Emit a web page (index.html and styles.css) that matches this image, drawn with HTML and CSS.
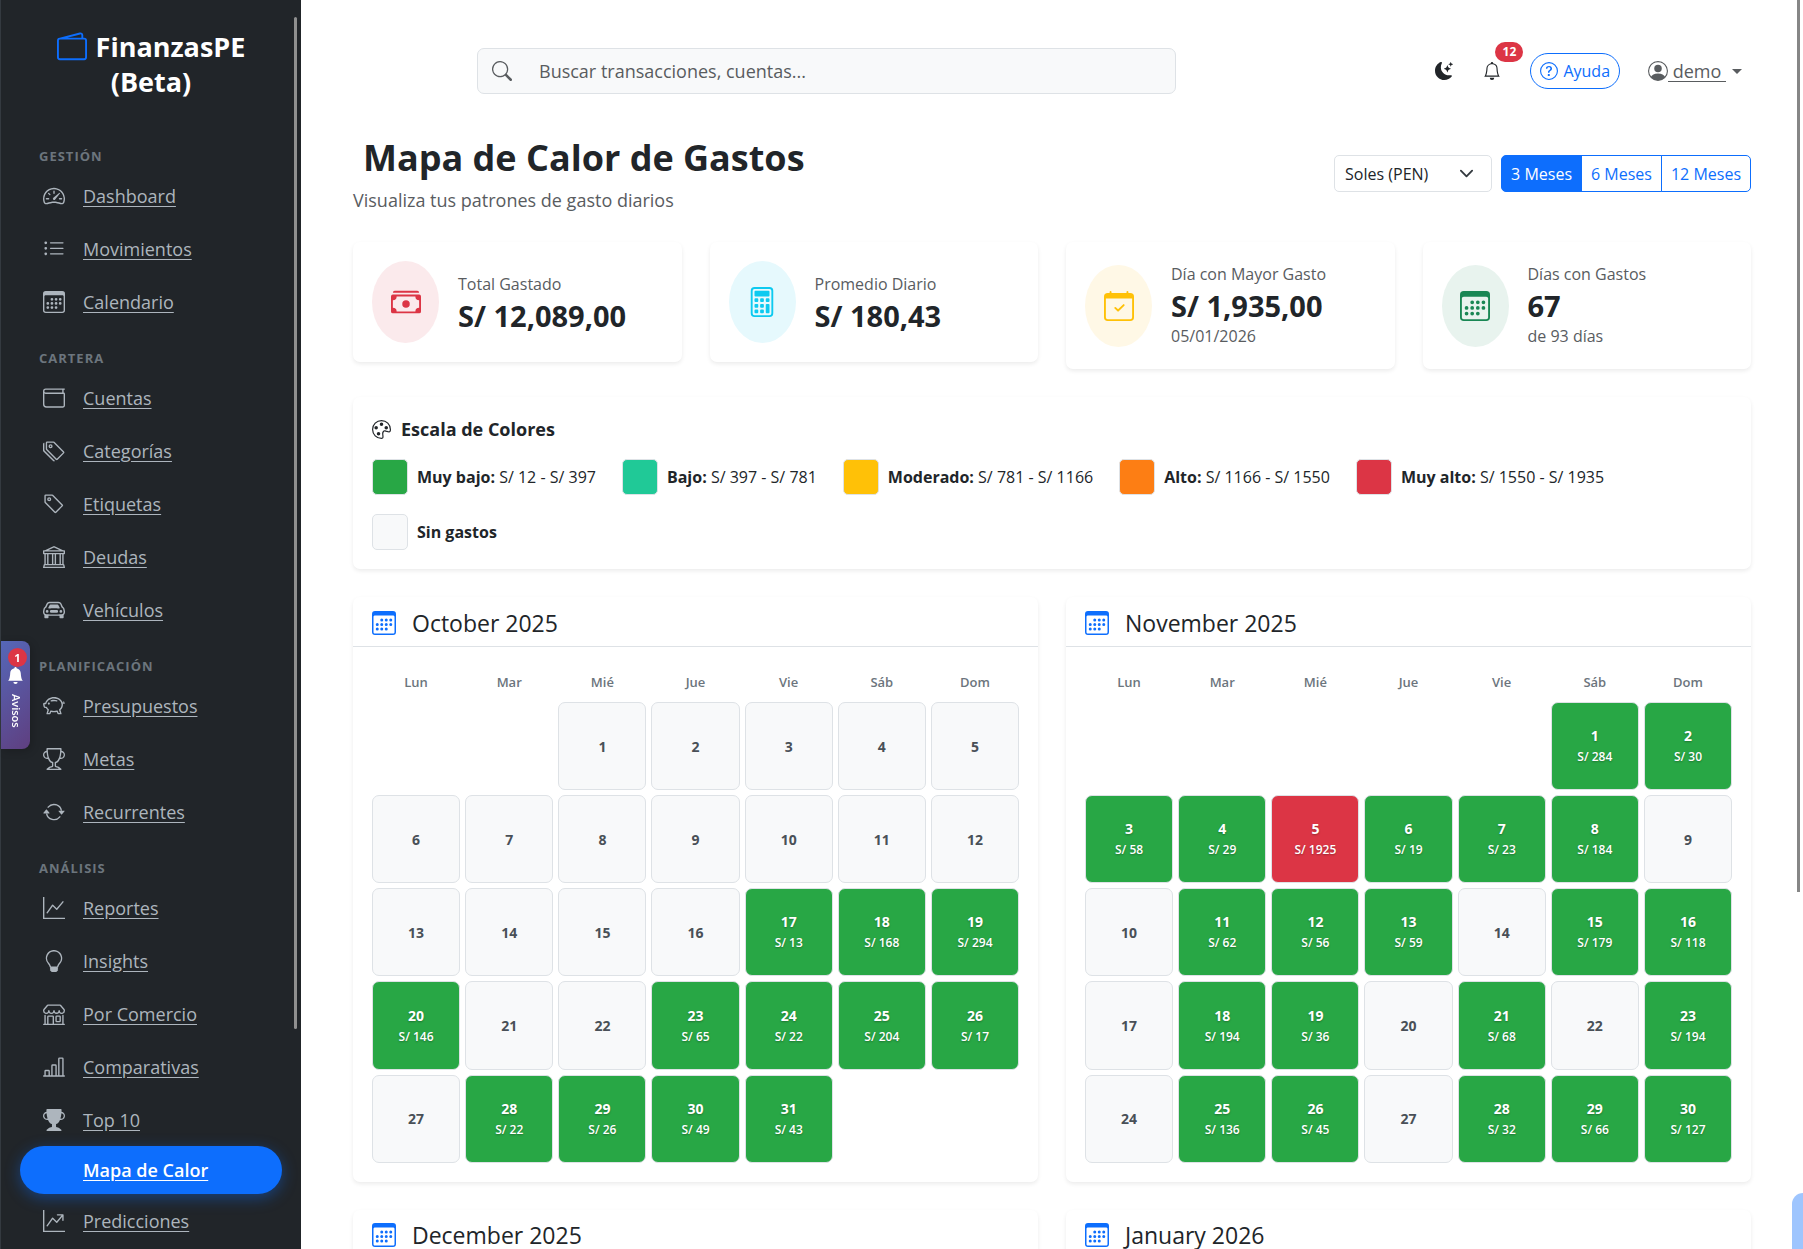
FILE: index.html
```html
<!DOCTYPE html>
<html lang="es">
<head>
<meta charset="utf-8">
<meta name="viewport" content="width=device-width, initial-scale=1">
<title>Mapa de Calor de Gastos - FinanzasPE</title>
<link rel="stylesheet" href="styles.css">
</head>
<body>
<svg class="sprite" aria-hidden="true">
<symbol id="wallet2" viewBox="0 0 16 16"><path d="M12.136.326A1.5 1.5 0 0 1 14 1.78V3h.5A1.5 1.5 0 0 1 16 4.5v9a1.5 1.5 0 0 1-1.5 1.5h-13A1.5 1.5 0 0 1 0 13.5v-9a1.5 1.5 0 0 1 1.432-1.499zM5.562 3H13V1.78a.5.5 0 0 0-.621-.484zM1.5 4a.5.5 0 0 0-.5.5v9a.5.5 0 0 0 .5.5h13a.5.5 0 0 0 .5-.5v-9a.5.5 0 0 0-.5-.5z"/></symbol>
<symbol id="speedometer" viewBox="0 0 16 16"><path d="M8 4a.5.5 0 0 1 .5.5V6a.5.5 0 0 1-1 0V4.5A.5.5 0 0 1 8 4M3.732 5.732a.5.5 0 0 1 .707 0l.915.914a.5.5 0 1 1-.708.708l-.914-.915a.5.5 0 0 1 0-.707M2 10a.5.5 0 0 1 .5-.5h1.586a.5.5 0 0 1 0 1H2.5A.5.5 0 0 1 2 10m9.5 0a.5.5 0 0 1 .5-.5h1.5a.5.5 0 0 1 0 1H12a.5.5 0 0 1-.5-.5m.754-4.246a.39.39 0 0 0-.527-.02L7.547 9.31a.91.91 0 1 0 1.302 1.258l3.434-4.297a.39.39 0 0 0-.029-.518z"/><path fill-rule="evenodd" d="M0 10a8 8 0 1 1 15.547 2.661c-.442 1.253-1.845 1.602-2.932 1.25C11.309 13.488 9.475 13 8 13c-1.474 0-3.31.488-4.615.911-1.087.352-2.49.003-2.932-1.25A8 8 0 0 1 0 10m8-7a7 7 0 0 0-6.603 9.329c.203.575.923.876 1.68.63C4.397 12.533 6.358 12 8 12s3.604.532 4.923.96c.757.245 1.477-.056 1.68-.631A7 7 0 0 0 8 3"/></symbol>
<symbol id="list" viewBox="0 0 16 16"><path d="M5 11.5a.5.5 0 0 1 .5-.5h9a.5.5 0 0 1 0 1h-9a.5.5 0 0 1-.5-.5m0-4a.5.5 0 0 1 .5-.5h9a.5.5 0 0 1 0 1h-9a.5.5 0 0 1-.5-.5m0-4a.5.5 0 0 1 .5-.5h9a.5.5 0 0 1 0 1h-9a.5.5 0 0 1-.5-.5m-3 1a1 1 0 1 0 0-2 1 1 0 0 0 0 2m0 4a1 1 0 1 0 0-2 1 1 0 0 0 0 2m0 4a1 1 0 1 0 0-2 1 1 0 0 0 0 2"/></symbol>
<symbol id="calendar" viewBox="0 0 16 16"><path d="M14 0H2a2 2 0 0 0-2 2v12a2 2 0 0 0 2 2h12a2 2 0 0 0 2-2V2a2 2 0 0 0-2-2M1 3.857C1 3.384 1.448 3 2 3h12c.552 0 1 .384 1 .857v10.286c0 .473-.448.857-1 .857H2c-.552 0-1-.384-1-.857z"/><path d="M6.500 7a1 1 0 1 0 0-2 1 1 0 0 0 0 2m3 0a1 1 0 1 0 0-2 1 1 0 0 0 0 2m3 0a1 1 0 1 0 0-2 1 1 0 0 0 0 2m-9 3a1 1 0 1 0 0-2 1 1 0 0 0 0 2m3 0a1 1 0 1 0 0-2 1 1 0 0 0 0 2m3 0a1 1 0 1 0 0-2 1 1 0 0 0 0 2m3 0a1 1 0 1 0 0-2 1 1 0 0 0 0 2m-9 3a1 1 0 1 0 0-2 1 1 0 0 0 0 2m3 0a1 1 0 1 0 0-2 1 1 0 0 0 0 2m3 0a1 1 0 1 0 0-2 1 1 0 0 0 0 2"/></symbol>
<symbol id="wallet" viewBox="0 0 16 16"><path d="M0 3a2 2 0 0 1 2-2h13.5a.5.5 0 0 1 0 1H15v2a1 1 0 0 1 1 1v8.5a1.500 1.500 0 0 1-1.500 1.500h-12A2.500 2.500 0 0 1 0 12.500zm1 1.732V12.500A1.500 1.500 0 0 0 2.500 14h12a.5.5 0 0 0 .5-.5V5H2a2 2 0 0 1-1-.268M1 3a1 1 0 0 0 1 1h12V2H2a1 1 0 0 0-1 1"/></symbol>
<symbol id="tags" viewBox="0 0 16 16"><path d="M3 2v4.586l7 7L14.586 9l-7-7zM2 2a1 1 0 0 1 1-1h4.586a1 1 0 0 1 .707.293l7 7a1 1 0 0 1 0 1.414l-4.586 4.586a1 1 0 0 1-1.414 0l-7-7A1 1 0 0 1 2 6.586z"/><path d="M5.500 5a.5.5 0 1 1 0-1 .5.5 0 0 1 0 1m0 1a1.500 1.500 0 1 0 0-3 1.500 1.500 0 0 0 0 3M1 7.086a1 1 0 0 0 .293.707L8.750 15.250l-.043.043a1 1 0 0 1-1.414 0l-7-7A1 1 0 0 1 0 7.586V3a1 1 0 0 1 1-1z"/></symbol>
<symbol id="tag" viewBox="0 0 16 16"><path d="M6 4.500a1.500 1.500 0 1 1-3 0 1.500 1.500 0 0 1 3 0m-1 0a.5.5 0 1 0-1 0 .5.5 0 0 0 1 0"/><path d="M2 1h4.586a1 1 0 0 1 .707.293l7 7a1 1 0 0 1 0 1.414l-4.586 4.586a1 1 0 0 1-1.414 0l-7-7A1 1 0 0 1 1 6.586V2a1 1 0 0 1 1-1m0 5.586 7 7L13.586 9l-7-7H2z"/></symbol>
<symbol id="bank" viewBox="0 0 16 16"><path d="m8 0 6.610 3h.89a.5.5 0 0 1 .5.5v2a.5.5 0 0 1-.5.5H15v7a.5.5 0 0 1 .485.38l.5 2a.498.498 0 0 1-.485.62H.5a.498.498 0 0 1-.485-.62l.5-2A.5.5 0 0 1 1 13V6H.5a.5.5 0 0 1-.5-.5v-2A.5.5 0 0 1 .5 3h.89zM3.777 3h8.447L8 1zM2 6v7h1V6zm2 0v7h2.500V6zm3.500 0v7h1V6zm2 0v7H12V6zM13 6v7h1V6zm2-1V4H1v1zm-.39 9H1.390l-.25 1h13.720z"/></symbol>
<symbol id="car" viewBox="0 0 16 16"><path d="M4 9a1 1 0 1 1-2 0 1 1 0 0 1 2 0m10 0a1 1 0 1 1-2 0 1 1 0 0 1 2 0M6 8a1 1 0 0 0 0 2h4a1 1 0 1 0 0-2zM4.862 4.276 3.906 6.190a.51.51 0 0 0 .497.731c.91-.073 2.350-.17 3.597-.17s2.688.097 3.597.17a.51.51 0 0 0 .497-.731l-.956-1.913A.5.5 0 0 0 10.691 4H5.309a.5.5 0 0 0-.447.276"/><path d="M2.520 3.515A2.500 2.500 0 0 1 4.820 2h6.362c1 0 1.904.596 2.298 1.515l.792 1.848c.075.175.21.319.38.404.5.25.855.715.965 1.262l.335 1.679q.05.242.049.49v.413c0 .814-.39 1.543-1 1.997V13.500a.5.5 0 0 1-.5.5h-2a.5.5 0 0 1-.5-.5v-1.338c-1.292.048-2.745.088-4 .088s-2.708-.04-4-.088V13.500a.5.5 0 0 1-.5.5h-2a.5.5 0 0 1-.5-.5v-1.892c-.61-.454-1-1.183-1-1.997v-.413a2.500 2.500 0 0 1 .049-.49l.335-1.680c.11-.546.465-1.012.964-1.261a.8.8 0 0 0 .381-.404l.792-1.848ZM4.820 3a1.500 1.500 0 0 0-1.379.91l-.792 1.847a1.800 1.800 0 0 1-.853.904.8.8 0 0 0-.43.564L1.030 8.904a1.500 1.500 0 0 0-.03.294v.413c0 .796.62 1.448 1.408 1.484 1.555.07 3.786.155 5.592.155s4.037-.084 5.592-.155A1.480 1.480 0 0 0 15 9.611v-.413q0-.148-.03-.294l-.335-1.680a.8.8 0 0 0-.43-.563 1.800 1.800 0 0 1-.853-.904l-.792-1.848A1.500 1.500 0 0 0 11.180 3z"/></symbol>
<symbol id="piggy" viewBox="0 0 16 16"><path d="M5 6.250a.75.75 0 1 1-1.500 0 .75.75 0 0 1 1.500 0m1.138-1.496A6.600 6.600 0 0 1 7.964 4.500c.666 0 1.303.097 1.893.273a.5.5 0 0 0 .286-.958A7.600 7.600 0 0 0 7.964 3.500c-.734 0-1.441.103-2.102.292a.5.5 0 1 0 .276.962"/><path fill-rule="evenodd" d="M7.964 1.527c-2.977 0-5.571 1.704-6.320 4.125h-.55A1 1 0 0 0 .11 6.824l.254 1.460a1.500 1.500 0 0 0 1.478 1.243h.263c.3.513.688.978 1.145 1.382l-.729 2.477a.5.5 0 0 0 .48.641h2a.5.5 0 0 0 .471-.332l.482-1.351c.635.173 1.310.267 2.011.267.707 0 1.388-.095 2.028-.272l.543 1.372a.5.5 0 0 0 .465.316h2a.5.5 0 0 0 .478-.645l-.761-2.506C13.810 9.895 14.500 8.559 14.500 7.069q0-.218-.02-.431c.261-.11.508-.266.705-.444.315.306.815.306.815-.417 0 .223-.5.223-.461-.026a1 1 0 0 0 .09-.255.7.7 0 0 0-.202-.645.58.58 0 0 0-.707-.098.74.74 0 0 0-.375.562c-.024.243.082.48.32.654a2 2 0 0 1-.259.153c-.534-2.664-3.284-4.595-6.442-4.595M2.516 6.260c.455-2.066 2.667-3.733 5.448-3.733 3.146 0 5.536 2.114 5.536 4.542 0 1.254-.624 2.410-1.670 3.248a.5.5 0 0 0-.165.535l.66 2.175h-.985l-.59-1.487a.5.5 0 0 0-.629-.288c-.661.23-1.390.359-2.157.359a6.600 6.600 0 0 1-2.157-.359.5.5 0 0 0-.635.304l-.525 1.471h-.979l.633-2.150a.5.5 0 0 0-.17-.534 4.650 4.650 0 0 1-1.284-1.541.5.5 0 0 0-.446-.275h-.56a.5.5 0 0 1-.492-.414l-.254-1.460h.933a.5.5 0 0 0 .488-.393m12.621-.857a.6.6 0 0 1-.098.21l-.044-.025c-.146-.09-.157-.175-.152-.223a.24.24 0 0 1 .117-.173c.049-.027.08-.021.113.012a.2.2 0 0 1 .064.199"/></symbol>
<symbol id="trophy" viewBox="0 0 16 16"><path d="M2.500.5A.5.5 0 0 1 3 0h10a.5.5 0 0 1 .5.5q0 .807-.034 1.536a3 3 0 1 1-1.133 5.890c-.79 1.865-1.878 2.777-2.833 3.011v2.173l1.425.356c.194.048.377.135.537.255L13.300 15.100a.5.5 0 0 1-.3.9H3a.5.5 0 0 1-.3-.9l1.838-1.379c.16-.12.343-.207.537-.255L6.500 13.110v-2.173c-.955-.234-2.043-1.146-2.833-3.012a3 3 0 1 1-1.132-5.890A33 33 0 0 1 2.500.5m.099 2.540a2 2 0 0 0 .72 3.935c-.333-1.050-.588-2.346-.72-3.935m10.083 3.935a2 2 0 0 0 .72-3.935c-.133 1.590-.388 2.885-.72 3.935M3.504 1q.01.775.056 1.469c.13 2.028.457 3.546.87 4.667C5.294 9.480 6.484 10 7 10a.5.5 0 0 1 .5.5v2.610a1 1 0 0 1-.757.97l-1.426.356a.5.5 0 0 0-.179.085L4.500 15h7l-.638-.479a.5.5 0 0 0-.18-.085l-1.425-.356a1 1 0 0 1-.757-.97V10.500A.5.5 0 0 1 9 10c.516 0 1.706-.52 2.570-2.864.413-1.120.74-2.640.87-4.667q.045-.694.056-1.469z"/></symbol>
<symbol id="trophy-fill" viewBox="0 0 16 16"><path d="M2.500.5A.5.5 0 0 1 3 0h10a.5.5 0 0 1 .5.5q0 .807-.034 1.536a3 3 0 1 1-1.133 5.890c-.79 1.865-1.878 2.777-2.833 3.011v2.173l1.425.356c.194.048.377.135.537.255L13.300 15.100a.5.5 0 0 1-.3.9H3a.5.5 0 0 1-.3-.9l1.838-1.379c.16-.12.343-.207.537-.255L6.500 13.110v-2.173c-.955-.234-2.043-1.146-2.833-3.012a3 3 0 1 1-1.132-5.890A33 33 0 0 1 2.500.5m.099 2.540a2 2 0 0 0 .72 3.935c-.333-1.050-.588-2.346-.72-3.935m10.083 3.935a2 2 0 0 0 .72-3.935c-.133 1.590-.388 2.885-.72 3.935"/></symbol>
<symbol id="repeat" viewBox="0 0 16 16"><path d="M11.534 7h3.932a.25.25 0 0 1 .192.41l-1.966 2.360a.25.25 0 0 1-.384 0l-1.966-2.360a.25.25 0 0 1 .192-.41m-11 2h3.932a.25.25 0 0 0 .192-.41L2.692 6.230a.25.25 0 0 0-.384 0L.342 8.590A.25.25 0 0 0 .534 9"/><path d="M8 3c-1.552 0-2.940.707-3.857 1.818a.5.5 0 1 1-.771-.636A6.002 6.002 0 0 1 13.917 7H12.900A5 5 0 0 0 8 3M3.100 9a5.002 5.002 0 0 0 8.757 2.182.5.5 0 1 1 .771.636A6.002 6.002 0 0 1 2.083 9z"/></symbol>
<symbol id="graph" viewBox="0 0 16 16"><path fill-rule="evenodd" d="M0 0h1v15h15v1H0zm14.817 3.113a.5.5 0 0 1 .07.704l-4.500 5.500a.5.5 0 0 1-.74.037L7.060 6.767l-3.656 5.027a.5.5 0 0 1-.808-.588l4-5.500a.5.5 0 0 1 .758-.06l2.609 2.610 4.150-5.073a.5.5 0 0 1 .704-.07"/></symbol>
<symbol id="graph-arrow" viewBox="0 0 16 16"><path fill-rule="evenodd" d="M0 0h1v15h15v1H0zm10 3.500a.5.5 0 0 1 .5-.5h4a.5.5 0 0 1 .5.5v4a.5.5 0 0 1-1 0V4.900l-3.613 4.417a.5.5 0 0 1-.74.037L7.060 6.767l-3.656 5.027a.5.5 0 0 1-.808-.588l4-5.500a.5.5 0 0 1 .758-.06l2.609 2.610L13.445 4H10.500a.5.5 0 0 1-.5-.5"/></symbol>
<symbol id="bulb" viewBox="0 0 16 16"><path d="M2 6a6 6 0 1 1 10.174 4.310c-.203.196-.359.4-.453.619l-.762 1.769A.5.5 0 0 1 10.500 13a.5.5 0 0 1 0 1 .5.5 0 0 1 0 1l-.224.447a1 1 0 0 1-.894.553H6.618a1 1 0 0 1-.894-.553L5.500 15a.5.5 0 0 1 0-1 .5.5 0 0 1 0-1 .5.5 0 0 1-.46-.302l-.761-1.770a2 2 0 0 0-.453-.618A5.980 5.980 0 0 1 2 6m6-5a5 5 0 0 0-3.479 8.592c.263.254.514.564.676.941L5.830 12h4.342l.632-1.467c.162-.377.413-.687.676-.941A5 5 0 0 0 8 1"/></symbol>
<symbol id="shop" viewBox="0 0 16 16"><path d="M2.970 1.350A1 1 0 0 1 3.730 1h8.540a1 1 0 0 1 .76.35l2.609 3.044A1.500 1.500 0 0 1 16 5.370v.255a2.375 2.375 0 0 1-4.250 1.458A2.370 2.370 0 0 1 9.875 8 2.370 2.370 0 0 1 8 7.083 2.370 2.370 0 0 1 6.125 8a2.370 2.370 0 0 1-1.875-.917A2.375 2.375 0 0 1 0 5.625V5.370a1.500 1.500 0 0 1 .361-.976zm1.780 4.275a1.375 1.375 0 0 0 2.750 0 .5.5 0 0 1 1 0 1.375 1.375 0 0 0 2.750 0 .5.5 0 0 1 1 0 1.375 1.375 0 1 0 2.750 0V5.370a.5.5 0 0 0-.12-.325L12.270 2H3.730L1.120 5.045A.5.5 0 0 0 1 5.370v.255a1.375 1.375 0 0 0 2.750 0 .5.5 0 0 1 1 0M1.500 8.500A.5.5 0 0 1 2 9v6h1v-5a1 1 0 0 1 1-1h3a1 1 0 0 1 1 1v5h6V9a.5.5 0 0 1 1 0v6h.5a.5.5 0 0 1 0 1H.5a.5.5 0 0 1 0-1H1V9a.5.5 0 0 1 .5-.5M4 15h3v-5H4zm5-5a1 1 0 0 1 1-1h2a1 1 0 0 1 1 1v3a1 1 0 0 1-1 1h-2a1 1 0 0 1-1-1zm3 0h-2v3h2z"/></symbol>
<symbol id="bars" viewBox="0 0 16 16"><path d="M11 2a1 1 0 0 1 1-1h2a1 1 0 0 1 1 1v12h.5a.5.5 0 0 1 0 1H.5a.5.5 0 0 1 0-1H1v-3a1 1 0 0 1 1-1h2a1 1 0 0 1 1 1v3h1V7a1 1 0 0 1 1-1h2a1 1 0 0 1 1 1v7h1zm1 12h2V2h-2zm-3 0V7H7v7zm-5 0v-3H2v3z"/></symbol>
<symbol id="search" viewBox="0 0 16 16"><path d="M11.742 10.344a6.500 6.500 0 1 0-1.397 1.398h-.001q.044.06.098.115l3.850 3.850a1 1 0 0 0 1.415-1.414l-3.850-3.850a1 1 0 0 0-.115-.1zM12 6.500a5.500 5.500 0 1 1-11 0 5.500 5.500 0 0 1 11 0"/></symbol>
<symbol id="moon" viewBox="0 0 16 16"><path d="M6 .278a.77.77 0 0 1 .08.858 7.200 7.200 0 0 0-.878 3.460c0 4.021 3.278 7.277 7.318 7.277q.792-.001 1.533-.16a.79.79 0 0 1 .81.316.73.73 0 0 1-.031.893A8.350 8.350 0 0 1 8.344 16C3.734 16 0 12.286 0 7.710 0 4.266 2.114 1.312 5.124.06A.75.75 0 0 1 6 .278"/><path d="M10.794 3.148a.217.217 0 0 1 .412 0l.387 1.162c.173.518.579.924 1.097 1.097l1.162.387a.217.217 0 0 1 0 .412l-1.162.387a1.730 1.730 0 0 0-1.097 1.097l-.387 1.162a.217.217 0 0 1-.412 0l-.387-1.162A1.730 1.730 0 0 0 9.310 6.593l-1.162-.387a.217.217 0 0 1 0-.412l1.162-.387a1.730 1.730 0 0 0 1.097-1.097zM13.863.099a.145.145 0 0 1 .274 0l.258.774c.115.346.386.617.732.732l.774.258a.145.145 0 0 1 0 .274l-.774.258a1.160 1.160 0 0 0-.732.732l-.258.774a.145.145 0 0 1-.274 0l-.258-.774a1.160 1.160 0 0 0-.732-.732l-.774-.258a.145.145 0 0 1 0-.274l.774-.258c.346-.115.617-.386.732-.732z"/></symbol>
<symbol id="bell" viewBox="0 0 16 16"><path d="M8 16a2 2 0 0 0 2-2H6a2 2 0 0 0 2 2M8 1.918l-.797.161A4 4 0 0 0 4 6c0 .628-.134 2.197-.459 3.742-.16.767-.376 1.566-.663 2.258h10.244c-.287-.692-.502-1.490-.663-2.258C12.134 8.197 12 6.628 12 6a4 4 0 0 0-3.203-3.920zM14.220 12c.223.447.481.801.78 1H1c.299-.199.557-.553.78-1C2.680 10.200 3 6.880 3 6c0-2.420 1.720-4.440 4.005-4.901a1 1 0 1 1 1.990 0A5 5 0 0 1 13 6c0 .88.32 4.200 1.220 6"/></symbol>
<symbol id="bell-fill" viewBox="0 0 16 16"><path d="M8 16a2 2 0 0 0 2-2H6a2 2 0 0 0 2 2m.995-14.901a1 1 0 1 0-1.990 0A5 5 0 0 0 3 6c0 1.098-.5 6-2 7h14c-1.500-1-2-5.902-2-7 0-2.420-1.720-4.440-4.005-4.901"/></symbol>
<symbol id="question" viewBox="0 0 16 16"><path d="M8 15A7 7 0 1 1 8 1a7 7 0 0 1 0 14m0 1A8 8 0 1 0 8 0a8 8 0 0 0 0 16"/><path d="M5.255 5.786a.237.237 0 0 0 .241.247h.825c.138 0 .248-.113.266-.25.09-.656.54-1.134 1.342-1.134.686 0 1.314.343 1.314 1.168 0 .635-.374.927-.965 1.371-.673.489-1.206 1.060-1.168 1.987l.003.217a.25.25 0 0 0 .25.246h.811a.25.25 0 0 0 .25-.25v-.105c0-.718.273-.927 1.010-1.486.609-.463 1.244-.977 1.244-2.056 0-1.511-1.276-2.241-2.673-2.241-1.267 0-2.655.59-2.750 2.286m1.557 5.763c0 .533.425.927 1.010.927.609 0 1.028-.394 1.028-.927 0-.552-.42-.94-1.029-.94-.584 0-1.009.388-1.009.94"/></symbol>
<symbol id="person" viewBox="0 0 16 16"><path d="M11 6a3 3 0 1 1-6 0 3 3 0 0 1 6 0"/><path fill-rule="evenodd" d="M0 8a8 8 0 1 1 16 0A8 8 0 0 1 0 8m8-7a7 7 0 0 0-5.468 11.370C3.242 11.226 4.805 10 8 10s4.757 1.225 5.468 2.370A7 7 0 0 0 8 1"/></symbol>
<symbol id="cash" viewBox="0 0 16 16"><path d="M1 3a1 1 0 0 1 1-1h12a1 1 0 0 1 1 1zm7 8a2 2 0 1 0 0-4 2 2 0 0 0 0 4"/><path d="M0 5a1 1 0 0 1 1-1h14a1 1 0 0 1 1 1v8a1 1 0 0 1-1 1H1a1 1 0 0 1-1-1zm3 0a2 2 0 0 1-2 2v4a2 2 0 0 1 2 2h10a2 2 0 0 1 2-2V7a2 2 0 0 1-2-2z"/></symbol>
<symbol id="calculator" viewBox="0 0 16 16"><path d="M12 1a1 1 0 0 1 1 1v12a1 1 0 0 1-1 1H4a1 1 0 0 1-1-1V2a1 1 0 0 1 1-1zM4 0a2 2 0 0 0-2 2v12a2 2 0 0 0 2 2h8a2 2 0 0 0 2-2V2a2 2 0 0 0-2-2z"/><path d="M4 2.500a.5.5 0 0 1 .5-.5h7a.5.5 0 0 1 .5.5v2a.5.5 0 0 1-.5.5h-7a.5.5 0 0 1-.5-.5zm0 4a.5.5 0 0 1 .5-.5h1a.5.5 0 0 1 .5.5v1a.5.5 0 0 1-.5.5h-1a.5.5 0 0 1-.5-.5zm0 3a.5.5 0 0 1 .5-.5h1a.5.5 0 0 1 .5.5v1a.5.5 0 0 1-.5.5h-1a.5.5 0 0 1-.5-.5zm0 3a.5.5 0 0 1 .5-.5h1a.5.5 0 0 1 .5.5v1a.5.5 0 0 1-.5.5h-1a.5.5 0 0 1-.5-.5zm3-6a.5.5 0 0 1 .5-.5h1a.5.5 0 0 1 .5.5v1a.5.5 0 0 1-.5.5h-1a.5.5 0 0 1-.5-.5zm0 3a.5.5 0 0 1 .5-.5h1a.5.5 0 0 1 .5.5v1a.5.5 0 0 1-.5.5h-1a.5.5 0 0 1-.5-.5zm0 3a.5.5 0 0 1 .5-.5h1a.5.5 0 0 1 .5.5v1a.5.5 0 0 1-.5.5h-1a.5.5 0 0 1-.5-.5zm3-6a.5.5 0 0 1 .5-.5h1a.5.5 0 0 1 .5.5v1a.5.5 0 0 1-.5.5h-1a.5.5 0 0 1-.5-.5zm0 3a.5.5 0 0 1 .5-.5h1a.5.5 0 0 1 .5.5v4a.5.5 0 0 1-.5.5h-1a.5.5 0 0 1-.5-.5z"/></symbol>
<symbol id="calendar-check" viewBox="0 0 16 16"><path d="M10.854 7.146a.5.5 0 0 1 0 .708l-3 3a.5.5 0 0 1-.708 0l-1.500-1.500a.5.5 0 1 1 .708-.708L7.500 9.793l2.646-2.647a.5.5 0 0 1 .708 0"/><path d="M3.500 0a.5.5 0 0 1 .5.5V1h8V.5a.5.5 0 0 1 1 0V1h1a2 2 0 0 1 2 2v11a2 2 0 0 1-2 2H2a2 2 0 0 1-2-2V3a2 2 0 0 1 2-2h1V.5a.5.5 0 0 1 .5-.5M1 4v10a1 1 0 0 0 1 1h12a1 1 0 0 0 1-1V4z"/></symbol>
<symbol id="palette" viewBox="0 0 16 16"><path d="M8 5a1.500 1.500 0 1 0 0-3 1.500 1.500 0 0 0 0 3m4 3a1.500 1.500 0 1 0 0-3 1.500 1.500 0 0 0 0 3M5 6.500a1.500 1.500 0 1 1-3 0 1.500 1.500 0 0 1 3 0m.5 6.500a1.500 1.500 0 1 0 0-3 1.500 1.500 0 0 0 0 3"/><path d="M16 8c0 3.150-1.866 2.585-3.567 2.070C11.420 9.763 10.465 9.473 10 10c-.603.683-.475 1.819-.351 2.920C9.826 14.495 9.996 16 8 16a8 8 0 1 1 8-8m-8 7c.611 0 .654-.171.655-.176.078-.146.124-.464.07-1.119-.014-.168-.037-.37-.061-.591-.052-.464-.112-1.005-.118-1.462-.01-.707.083-1.610.704-2.314.369-.417.845-.578 1.272-.618.404-.038.812.026 1.160.104.343.077.702.186 1.025.284l.028.008c.346.105.658.199.953.266.653.148.904.083.991.024C14.717 9.380 15 9.161 15 8a7 7 0 1 0-7 7"/></symbol>
</svg>

<div class="app">
  <aside class="sidebar">
    <div class="brand"><svg class="brand-icon"><use href="#wallet2"/></svg> FinanzasPE<br>(Beta)</div>
    <nav class="nav">
      <h2 class="nav-heading">GESTIÓN</h2>
      <a class="nav-link" href="#"><svg class="nav-icon"><use href="#speedometer"/></svg><span>Dashboard</span></a>
      <a class="nav-link" href="#"><svg class="nav-icon"><use href="#list"/></svg><span>Movimientos</span></a>
      <a class="nav-link" href="#"><svg class="nav-icon"><use href="#calendar"/></svg><span>Calendario</span></a>
      <h2 class="nav-heading">CARTERA</h2>
      <a class="nav-link" href="#"><svg class="nav-icon"><use href="#wallet"/></svg><span>Cuentas</span></a>
      <a class="nav-link" href="#"><svg class="nav-icon"><use href="#tags"/></svg><span>Categorías</span></a>
      <a class="nav-link" href="#"><svg class="nav-icon"><use href="#tag"/></svg><span>Etiquetas</span></a>
      <a class="nav-link" href="#"><svg class="nav-icon"><use href="#bank"/></svg><span>Deudas</span></a>
      <a class="nav-link" href="#"><svg class="nav-icon"><use href="#car"/></svg><span>Vehículos</span></a>
      <h2 class="nav-heading">PLANIFICACIÓN</h2>
      <a class="nav-link" href="#"><svg class="nav-icon"><use href="#piggy"/></svg><span>Presupuestos</span></a>
      <a class="nav-link" href="#"><svg class="nav-icon"><use href="#trophy"/></svg><span>Metas</span></a>
      <a class="nav-link" href="#"><svg class="nav-icon"><use href="#repeat"/></svg><span>Recurrentes</span></a>
      <h2 class="nav-heading">ANÁLISIS</h2>
      <a class="nav-link" href="#"><svg class="nav-icon"><use href="#graph"/></svg><span>Reportes</span></a>
      <a class="nav-link" href="#"><svg class="nav-icon"><use href="#bulb"/></svg><span>Insights</span></a>
      <a class="nav-link" href="#"><svg class="nav-icon"><use href="#shop"/></svg><span>Por Comercio</span></a>
      <a class="nav-link" href="#"><svg class="nav-icon"><use href="#bars"/></svg><span>Comparativas</span></a>
      <a class="nav-link" href="#"><svg class="nav-icon"><use href="#trophy-fill"/></svg><span>Top 10</span></a>
      <a class="nav-link active" href="#" aria-current="page"><span>Mapa de Calor</span></a>
      <a class="nav-link" href="#"><svg class="nav-icon"><use href="#graph-arrow"/></svg><span>Predicciones</span></a>
    </nav>
    <div class="sidebar-thumb"></div>
  </aside>

  <main class="main">
    <header class="topbar">
      <label class="search">
        <svg class="search-icon" aria-hidden="true"><use href="#search"/></svg>
        <input class="search-input" type="search" placeholder="Buscar transacciones, cuentas..." aria-label="Buscar">
      </label>
      <div class="actions">
        <button class="icon-btn" type="button" aria-label="Tema oscuro"><svg class="icon-sm"><use href="#moon"/></svg></button>
        <button class="icon-btn" type="button" aria-label="Notificaciones"><svg class="icon-sm"><use href="#bell"/></svg><span class="badge">12</span></button>
        <button class="help" type="button"><svg class="icon-sm"><use href="#question"/></svg>Ayuda</button>
        <a class="user" href="#"><svg class="user-icon"><use href="#person"/></svg><span class="user-name">&nbsp;demo&nbsp;</span><span class="caret"></span></a>
      </div>
    </header>

    <section class="title-row">
      <div>
        <h1 class="title">Mapa de Calor de Gastos</h1>
        <p class="subtitle">Visualiza tus patrones de gasto diarios</p>
      </div>
      <div class="controls">
        <select class="select" aria-label="Moneda"><option>Soles (PEN)</option></select>
        <div class="btn-group" role="group">
          <button class="range active" type="button">3 Meses</button>
          <button class="range" type="button">6 Meses</button>
          <button class="range" type="button">12 Meses</button>
        </div>
      </div>
    </section>

    <section class="stats">
      <article class="card stat">
        <div class="bubble red"><svg class="stat-icon"><use href="#cash"/></svg></div>
        <div><p class="stat-label">Total Gastado</p><p class="stat-value">S/ 12,089,00</p></div>
      </article>
      <article class="card stat">
        <div class="bubble cyan"><svg class="stat-icon"><use href="#calculator"/></svg></div>
        <div><p class="stat-label">Promedio Diario</p><p class="stat-value">S/ 180,43</p></div>
      </article>
      <article class="card stat">
        <div class="bubble yellow"><svg class="stat-icon"><use href="#calendar-check"/></svg></div>
        <div><p class="stat-label">Día con Mayor Gasto</p><p class="stat-value">S/ 1,935,00</p><p class="stat-label">05/01/2026</p></div>
      </article>
      <article class="card stat">
        <div class="bubble green"><svg class="stat-icon"><use href="#calendar"/></svg></div>
        <div><p class="stat-label">Días con Gastos</p><p class="stat-value">67</p><p class="stat-label">de 93 días</p></div>
      </article>
    </section>

    <section class="card legend">
      <h2 class="legend-title"><svg class="legend-icon"><use href="#palette"/></svg>Escala de Colores</h2>
      <ul class="legend-list">
        <li class="legend-item"><span class="swatch l1"></span><span><b>Muy bajo:</b> S/ 12 - S/ 397</span></li>
        <li class="legend-item"><span class="swatch l2"></span><span><b>Bajo:</b> S/ 397 - S/ 781</span></li>
        <li class="legend-item"><span class="swatch l3"></span><span><b>Moderado:</b> S/ 781 - S/ 1166</span></li>
        <li class="legend-item"><span class="swatch l4"></span><span><b>Alto:</b> S/ 1166 - S/ 1550</span></li>
        <li class="legend-item"><span class="swatch l5"></span><span><b>Muy alto:</b> S/ 1550 - S/ 1935</span></li>
        <li class="legend-item"><span class="swatch"></span><b>Sin gastos</b></li>
      </ul>
    </section>

    <section class="months">
      <article class="card">
        <h2 class="month-title"><svg class="month-icon"><use href="#calendar"/></svg>October 2025</h2>
        <div class="month-body">
          <div class="weekdays"><span>Lun</span><span>Mar</span><span>Mié</span><span>Jue</span><span>Vie</span><span>Sáb</span><span>Dom</span></div>
          <ol class="days">
            <li class="day from-wed">1</li><li class="day">2</li><li class="day">3</li><li class="day">4</li><li class="day">5</li>
            <li class="day">6</li><li class="day">7</li><li class="day">8</li><li class="day">9</li><li class="day">10</li><li class="day">11</li><li class="day">12</li>
            <li class="day">13</li><li class="day">14</li><li class="day">15</li><li class="day">16</li><li class="day l1">17<small>S/ 13</small></li><li class="day l1">18<small>S/ 168</small></li><li class="day l1">19<small>S/ 294</small></li>
            <li class="day l1">20<small>S/ 146</small></li><li class="day">21</li><li class="day">22</li><li class="day l1">23<small>S/ 65</small></li><li class="day l1">24<small>S/ 22</small></li><li class="day l1">25<small>S/ 204</small></li><li class="day l1">26<small>S/ 17</small></li>
            <li class="day">27</li><li class="day l1">28<small>S/ 22</small></li><li class="day l1">29<small>S/ 26</small></li><li class="day l1">30<small>S/ 49</small></li><li class="day l1">31<small>S/ 43</small></li>
          </ol>
        </div>
      </article>
      <article class="card">
        <h2 class="month-title"><svg class="month-icon"><use href="#calendar"/></svg>November 2025</h2>
        <div class="month-body">
          <div class="weekdays"><span>Lun</span><span>Mar</span><span>Mié</span><span>Jue</span><span>Vie</span><span>Sáb</span><span>Dom</span></div>
          <ol class="days">
            <li class="day l1 from-sat">1<small>S/ 284</small></li><li class="day l1">2<small>S/ 30</small></li>
            <li class="day l1">3<small>S/ 58</small></li><li class="day l1">4<small>S/ 29</small></li><li class="day l5">5<small>S/ 1925</small></li><li class="day l1">6<small>S/ 19</small></li><li class="day l1">7<small>S/ 23</small></li><li class="day l1">8<small>S/ 184</small></li><li class="day">9</li>
            <li class="day">10</li><li class="day l1">11<small>S/ 62</small></li><li class="day l1">12<small>S/ 56</small></li><li class="day l1">13<small>S/ 59</small></li><li class="day">14</li><li class="day l1">15<small>S/ 179</small></li><li class="day l1">16<small>S/ 118</small></li>
            <li class="day">17</li><li class="day l1">18<small>S/ 194</small></li><li class="day l1">19<small>S/ 36</small></li><li class="day">20</li><li class="day l1">21<small>S/ 68</small></li><li class="day">22</li><li class="day l1">23<small>S/ 194</small></li>
            <li class="day">24</li><li class="day l1">25<small>S/ 136</small></li><li class="day l1">26<small>S/ 45</small></li><li class="day">27</li><li class="day l1">28<small>S/ 32</small></li><li class="day l1">29<small>S/ 66</small></li><li class="day l1">30<small>S/ 127</small></li>
          </ol>
        </div>
      </article>
      <article class="card">
        <h2 class="month-title"><svg class="month-icon"><use href="#calendar"/></svg>December 2025</h2>
      </article>
      <article class="card">
        <h2 class="month-title"><svg class="month-icon"><use href="#calendar"/></svg>January 2026</h2>
      </article>
    </section>
  </main>
</div>

<button class="notices" type="button"><span class="notices-badge">1</span><svg class="notices-icon"><use href="#bell-fill"/></svg><span class="notices-text">Avisos</span></button>
<div class="page-thumb"></div>
<div class="drawer-handle"></div>
</body>
</html>
```
FILE: styles.css
```css
* { box-sizing: border-box; }

body {
  margin: 0;
  font-family: "Open Sans", "Noto Sans", sans-serif;
  font-size: 18px;
  color: #212529;
  background: #fff;
}

h1, h2, p, ul, ol { margin: 0; padding: 0; }
ul, ol { list-style: none; }
svg { fill: currentColor; flex: none; }
button, input, select { font: inherit; color: inherit; }
.sprite { position: absolute; width: 0; height: 0; }

.app { display: flex; height: 100vh; overflow: hidden; }

/* Sidebar */
.sidebar {
  position: relative;
  flex: 0 0 301px;
  padding: 29px 19px 0;
  overflow: hidden;
  background: #212529;
  border-left: 1px solid #343a40;
}
.brand {
  height: 97px;
  font-size: 27px;
  line-height: 35px;
  font-weight: 700;
  color: #fff;
  text-align: center;
}
.brand-icon { width: 30px; height: 30px; margin-right: 2px; color: #0d6efd; vertical-align: -5px; }
.nav-heading {
  height: 43px;
  padding: 19px 19px 0;
  font-size: 13px;
  line-height: 22px;
  font-weight: 700;
  letter-spacing: 1px;
  color: #6c757d;
}
.nav-link {
  display: flex;
  align-items: center;
  gap: 18px;
  height: 53px;
  padding-left: 23px;
  font-size: 18px;
  color: #adb5bd;
  border-radius: 24px;
  text-underline-offset: 3px;
}
.nav-icon { width: 22px; height: 22px; }
.nav-link.active {
  height: 48px;
  padding-left: 63px;
  font-weight: 600;
  color: #fff;
  background: #0d6efd;
  box-shadow: 0 4px 15px rgba(13, 110, 253, .4);
}
.sidebar-thumb {
  position: absolute;
  top: 17px;
  right: 4px;
  width: 3px;
  height: 81%;
  border-radius: 2px;
  background: #8f8f8f;
}

/* Main column */
.main { flex: 1; min-width: 0; padding: 48px 52px; overflow-y: auto; scrollbar-width: none; }
.topbar { display: flex; align-items: center; justify-content: space-between; height: 46px; }
.search {
  display: flex;
  align-items: center;
  gap: 27px;
  flex: 0 0 50%;
  height: 46px;
  margin-left: 124px;
  padding: 0 14px;
  background: #f8f9fa;
  border: 1px solid #dee2e6;
  border-radius: 7px;
  color: #595c5f;
}
.search-icon { width: 20px; height: 20px; }
.search-input { flex: 1; min-width: 0; border: 0; padding: 0; background: none; outline: 0; }
.search-input::placeholder { color: #595c5f; opacity: 1; }

.actions { display: flex; align-items: center; padding-right: 9px; }
.icon-btn { position: relative; display: flex; padding: 15px; border: 0; background: none; }
.icon-sm { width: 18px; height: 18px; }
.badge {
  position: absolute;
  top: -5px;
  right: -7px;
  width: 28px;
  border-radius: 10px;
  background: #dc3545;
  color: #fff;
  font-size: 12px;
  line-height: 20px;
  font-weight: 700;
  text-align: center;
}
.help {
  display: flex;
  align-items: center;
  gap: 5px;
  height: 36px;
  margin-left: 14px;
  padding: 0 9px;
  border: 1px solid #0d6efd;
  border-radius: 18px;
  background: #fff;
  color: #0d6efd;
  font-size: 16px;
}
.user { display: flex; align-items: center; margin-left: 28px; color: #595c5f; text-decoration: none; }
.user-icon { width: 20px; height: 20px; }
.user-name { text-decoration: underline; text-underline-offset: 3px; }
.caret { margin-left: 6px; border: 5px solid transparent; border-top-color: currentColor; border-bottom: 0; }

.title-row { display: flex; align-items: center; justify-content: space-between; margin: 40px 0 29px; }
.title { padding-left: 10px; font-size: 36px; line-height: 48px; font-weight: 700; }
.subtitle { margin-top: 5px; line-height: 26px; color: #595c5f; }
.controls { display: flex; gap: 9px; font-size: 16px; }
.select {
  width: 158px;
  height: 37px;
  padding: 0 10px;
  appearance: none;
  border: 1px solid #dee2e6;
  border-radius: 5px;
  background: #fff url("data:image/svg+xml,%3Csvg xmlns='http://www.w3.org/2000/svg' viewBox='0 0 16 16'%3E%3Cpath fill='none' stroke='%23343a40' stroke-linecap='round' stroke-linejoin='round' stroke-width='2' d='m2 5 6 6 6-6'/%3E%3C/svg%3E") no-repeat right 17px center / 15px 15px;
}
.btn-group { display: flex; }
.range {
  height: 37px;
  padding: 0 9px;
  margin-left: -1px;
  border: 1px solid #0d6efd;
  background: #fff;
  color: #0d6efd;
}
.range:first-child { margin-left: 0; border-radius: 5px 0 0 5px; }
.range:last-child { border-radius: 0 5px 5px 0; }
.range.active { background: #0d6efd; color: #fff; }

/* Cards */
.card { background: #fff; border-radius: 7px; box-shadow: 0 2px 4px rgba(0, 0, 0, .08); }
.stats { display: grid; grid-template-columns: repeat(4, 1fr); gap: 28px; align-items: start; }
.stat { display: flex; align-items: center; gap: 19px; padding: 19px; }
.bubble { display: flex; align-items: center; justify-content: center; flex: none; width: 67px; height: 82px; border-radius: 50%; }
.bubble.red { background: #fbeaec; color: #dc3545; }
.bubble.cyan { background: #e6f9fd; color: #0dcaf0; }
.bubble.yellow { background: #fff8e6; color: #ffc107; }
.bubble.green { background: #e8f3ee; color: #198754; }
.stat-icon { width: 30px; height: 30px; }
.stat-label { font-size: 16px; line-height: 27px; color: #595c5f; }
.stat-value { font-size: 29px; line-height: 35px; font-weight: 700; }

.legend { margin: 28px 0; padding: 19px; }
.legend-title { display: flex; align-items: center; gap: 10px; font-size: 18px; line-height: 26px; font-weight: 700; }
.legend-icon { width: 19px; height: 19px; }
.legend-list { display: flex; flex-wrap: wrap; gap: 19px 26px; margin-top: 17px; font-size: 16px; }
.legend-item { display: flex; align-items: center; gap: 9px; }
.swatch { width: 36px; height: 36px; border: 1px solid #dee2e6; border-radius: 5px; background: #f8f9fa; }
.swatch.l1 { background: #28a745; }
.swatch.l2 { background: #20c997; }
.swatch.l3 { background: #ffc107; }
.swatch.l4 { background: #fd7e14; }
.swatch.l5 { background: #dc3545; }

/* Month calendars */
.months { display: grid; grid-template-columns: repeat(2, 1fr); gap: 28px; }
.month-title {
  display: flex;
  align-items: center;
  gap: 16px;
  height: 50px;
  padding: 2px 19px 0;
  border-bottom: 1px solid #dee2e6;
  font-size: 23px;
  font-weight: 400;
}
.month-icon { width: 24px; height: 24px; color: #0d6efd; }
.month-body { padding: 19px; }
.weekdays, .days { display: grid; grid-template-columns: repeat(7, 1fr); gap: 5px; }
.weekdays { height: 36px; padding-top: 2px; font-size: 13px; line-height: 29px; font-weight: 600; color: #6c757d; text-align: center; }
.day {
  display: flex;
  flex-direction: column;
  align-items: center;
  justify-content: center;
  aspect-ratio: 1;
  border: 1px solid #dee2e6;
  border-radius: 7px;
  background: #f8f9fa;
  font-size: 14px;
  line-height: 21px;
  font-weight: 700;
  color: #495057;
}
.day small { font-size: 12px; font-weight: 600; }
.day.l1, .day.l5 { color: #fff; text-shadow: 0 1px 2px rgba(0, 0, 0, .3); }
.day.l1 { background: #28a745; }
.day.l5 { background: #dc3545; }
.from-wed { grid-column-start: 3; }
.from-sat { grid-column-start: 6; }

/* Floating pieces */
.notices {
  position: fixed;
  left: 1px;
  top: 641px;
  display: flex;
  flex-direction: column;
  align-items: center;
  gap: 10px;
  width: 29px;
  height: 108px;
  padding: 26px 0 0;
  border: 0;
  border-radius: 0 8px 8px 0;
  background: linear-gradient(135deg, #5567b8, #5f3f80);
  box-shadow: 2px 2px 8px rgba(0, 0, 0, .2);
  color: #fff;
}
.notices-badge {
  position: absolute;
  top: 7px;
  left: 7px;
  width: 19px;
  border-radius: 50%;
  background: #dc3545;
  font-size: 11px;
  line-height: 19px;
  font-weight: 700;
}
.notices-icon { width: 17px; height: 17px; }
.notices-text { writing-mode: vertical-rl; font-size: 11px; line-height: 14px; font-weight: 600; }
.page-thumb { position: fixed; top: 0; right: 3px; width: 3px; height: 71.4%; background: #868686; }
.drawer-handle { position: fixed; top: 1193px; right: 0; bottom: 0; width: 11px; border-radius: 11px 0 0 0; background: #9ec5fe; }
```
